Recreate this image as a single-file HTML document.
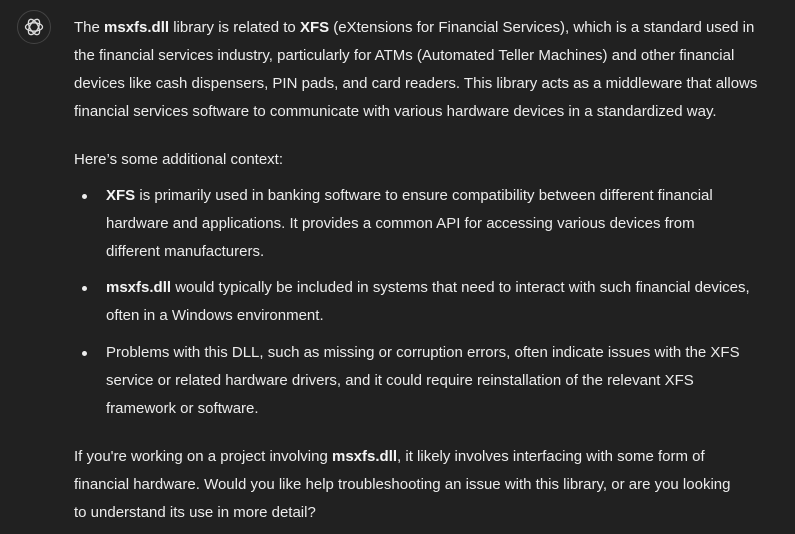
<!DOCTYPE html>
<html><head><style>
body{margin:0;background:#212121;width:795px;height:534px;overflow:hidden;font-family:"Liberation Sans",sans-serif;color:#ececec;font-size:15px}
.l{position:absolute;white-space:nowrap;line-height:20px}
b{font-weight:bold;color:#f4f4f4}
.d{position:absolute;width:5px;height:5px;border-radius:50%;background:#ececec;left:82px}
.ic{position:absolute;left:17px;top:10px;width:34px;height:34px;border:1px solid #444;border-radius:50%;box-sizing:border-box}
</style></head><body>
<div class="ic"><svg width="32" height="32" viewBox="0 0 32 32" style="position:absolute;left:0;top:0"><g fill="none" stroke="#ddd" stroke-width="1.3"><ellipse cx="16" cy="16" rx="8.5" ry="4.2"/><ellipse cx="16" cy="16" rx="8.5" ry="4.2" transform="rotate(60 16 16)"/><ellipse cx="16" cy="16" rx="8.5" ry="4.2" transform="rotate(120 16 16)"/></g></svg></div>
<div class="l" style="left:74px;top:18px">The <b>msxfs.dll</b> library is related to <b>XFS</b> (eXtensions for Financial Services), which is a standard used in</div>
<div class="l" style="left:74px;top:46px">the financial services industry, particularly for ATMs (Automated Teller Machines) and other financial</div>
<div class="l" style="left:74px;top:74px">devices like cash dispensers, PIN pads, and card readers. This library acts as a middleware that allows</div>
<div class="l" style="left:74px;top:102px">financial services software to communicate with various hardware devices in a standardized way.</div>
<div class="l" style="left:74px;top:150px">Here’s some additional context:</div>
<div class="d" style="top:194px"></div>
<div class="l" style="left:106px;top:186px"><b>XFS</b> is primarily used in banking software to ensure compatibility between different financial</div>
<div class="l" style="left:106px;top:214px">hardware and applications. It provides a common API for accessing various devices from</div>
<div class="l" style="left:106px;top:242px">different manufacturers.</div>
<div class="d" style="top:286px"></div>
<div class="l" style="left:106px;top:278px"><b>msxfs.dll</b> would typically be included in systems that need to interact with such financial devices,</div>
<div class="l" style="left:106px;top:306px">often in a Windows environment.</div>
<div class="d" style="top:351px"></div>
<div class="l" style="left:106px;top:343px">Problems with this DLL, such as missing or corruption errors, often indicate issues with the XFS</div>
<div class="l" style="left:106px;top:371px">service or related hardware drivers, and it could require reinstallation of the relevant XFS</div>
<div class="l" style="left:106px;top:399px">framework or software.</div>
<div class="l" style="left:74px;top:447px">If you're working on a project involving <b>msxfs.dll</b>, it likely involves interfacing with some form of</div>
<div class="l" style="left:74px;top:475px">financial hardware. Would you like help troubleshooting an issue with this library, or are you looking</div>
<div class="l" style="left:74px;top:503px">to understand its use in more detail?</div>
</body></html>
